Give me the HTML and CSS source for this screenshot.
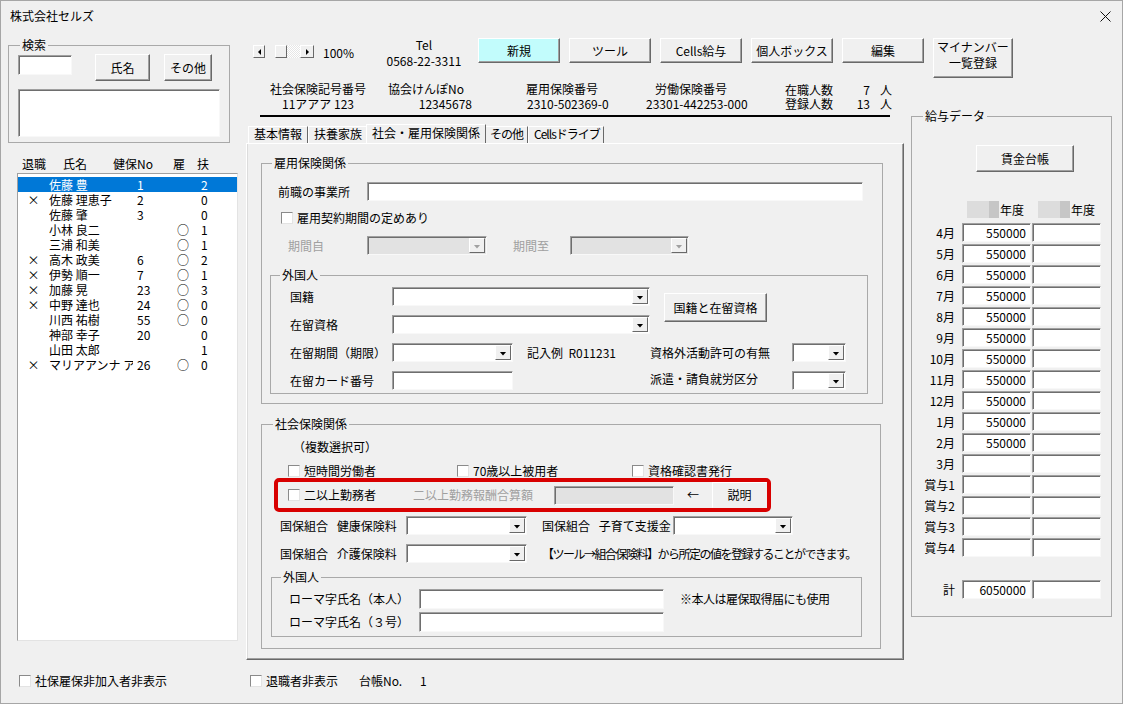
FILE: index.html
```html
<!DOCTYPE html>
<html lang="ja">
<head>
<meta charset="utf-8">
<title>株式会社セルズ</title>
<link rel="stylesheet" href="styles.css">
</head>
<body>
<div class="window">
  <div class="titlebar">
    <span class="title">株式会社セルズ</span>
    <svg class="close" width="11" height="11" viewBox="0 0 11 11"><path d="M0.5 0.5L10.5 10.5M10.5 0.5L0.5 10.5" stroke="#111" stroke-width="1"/></svg>
  </div>
  <div class="main">
    <div class="left">
      <fieldset class="group search">
        <legend>検索</legend>
        <div class="search-row">
          <div class="txt search-input"></div>
          <div class="btn btn-name">氏名</div>
          <div class="btn btn-other">その他</div>
        </div>
        <div class="txt search-list"></div>
      </fieldset>
      <div class="list-head">
        <span class="h-ret">退職</span><span class="h-name">氏名</span><span class="h-no">健保No</span><span class="h-koyo">雇</span><span>扶</span>
      </div>
      <div class="listbox">
        <div class="lrow sel"><span class="c-x"></span><span class="c-name">佐藤 豊</span><span class="c-no">1</span><span class="c-o"></span><span class="c-f">2</span></div>
        <div class="lrow"><span class="c-x">×</span><span class="c-name">佐藤 理恵子</span><span class="c-no">2</span><span class="c-o"></span><span class="c-f">0</span></div>
        <div class="lrow"><span class="c-x"></span><span class="c-name">佐藤 肇</span><span class="c-no">3</span><span class="c-o"></span><span class="c-f">0</span></div>
        <div class="lrow"><span class="c-x"></span><span class="c-name">小林 良二</span><span class="c-no"></span><span class="c-o">○</span><span class="c-f">1</span></div>
        <div class="lrow"><span class="c-x"></span><span class="c-name">三浦 和美</span><span class="c-no"></span><span class="c-o">○</span><span class="c-f">1</span></div>
        <div class="lrow"><span class="c-x">×</span><span class="c-name">高木 政美</span><span class="c-no">6</span><span class="c-o">○</span><span class="c-f">2</span></div>
        <div class="lrow"><span class="c-x">×</span><span class="c-name">伊勢 順一</span><span class="c-no">7</span><span class="c-o">○</span><span class="c-f">1</span></div>
        <div class="lrow"><span class="c-x">×</span><span class="c-name">加藤 晃</span><span class="c-no">23</span><span class="c-o">○</span><span class="c-f">3</span></div>
        <div class="lrow"><span class="c-x">×</span><span class="c-name">中野 達也</span><span class="c-no">24</span><span class="c-o">○</span><span class="c-f">0</span></div>
        <div class="lrow"><span class="c-x"></span><span class="c-name">川西 祐樹</span><span class="c-no">55</span><span class="c-o">○</span><span class="c-f">0</span></div>
        <div class="lrow"><span class="c-x"></span><span class="c-name">神部 幸子</span><span class="c-no">20</span><span class="c-o"></span><span class="c-f">0</span></div>
        <div class="lrow"><span class="c-x"></span><span class="c-name">山田 太郎</span><span class="c-no"></span><span class="c-o"></span><span class="c-f">1</span></div>
        <div class="lrow"><span class="c-x">×</span><span class="c-name">マリアアンナ アウグスト</span><span class="c-no">26</span><span class="c-o">○</span><span class="c-f">0</span></div>
      </div>
      <label class="chkrow left-foot"><span class="chk"></span>社保雇保非加入者非表示</label>
    </div>

    <div class="rightpart">
      <div class="toolbar">
        <div class="scroll"><span class="sb sb-l"></span><span class="sb-gap"></span><span class="sb-thumb"></span><span class="sb-track"></span><span class="sb sb-r"></span></div>
        <div class="zoom">100%</div>
        <div class="tel"><div>Tel</div><div>0568-22-3311</div></div>
        <div class="tb-btns">
          <div class="btn tbtn new">新規</div>
          <div class="btn tbtn">ツール</div>
          <div class="btn tbtn">Cells給与</div>
          <div class="btn tbtn">個人ボックス</div>
          <div class="btn tbtn">編集</div>
          <div class="btn tbtn mynum">マイナンバー<br>一覧登録</div>
        </div>
      </div>

      <div class="lower">
        <div class="center">
          <div class="info">
            <div class="b1"><div>社会保険記号番号</div><div>11アアア 123</div></div>
            <div class="b2"><div class="lab">協会けんぽNo</div><div>12345678</div></div>
            <div class="b3"><div>雇用保険番号</div><div class="val">2310-502369-0</div></div>
            <div class="b4"><div class="lab">労働保険番号</div><div>23301-442253-000</div></div>
            <div class="b5">
              <span>在職人数</span><span class="num">7</span><span class="unit">人</span>
              <span>登録人数</span><span class="num">13</span><span class="unit">人</span>
            </div>
          </div>
          <div class="rule"></div>

          <div class="tabs">
            <div class="tab">基本情報</div>
            <div class="tab">扶養家族</div>
            <div class="tab sel">社会・雇用保険関係</div>
            <div class="tab t4">その他</div>
            <div class="tab t5">Cellsドライブ</div>
          </div>
          <div class="tabpanel">
            <fieldset class="group koyo">
              <legend>雇用保険関係</legend>
              <div class="row row-prev">
                <span class="lbl-prev">前職の事業所</span>
                <div class="txt in-prev"></div>
              </div>
              <label class="chkrow row-keiyaku"><span class="chk"></span>雇用契約期間の定めあり</label>
              <div class="row row-kikan">
                <span class="dis-lbl lbl-kikan1">期間自</span>
                <div class="txt combo dis w120"><span class="arr"></span></div>
                <span class="dis-lbl lbl-kikan2">期間至</span>
                <div class="txt combo dis w119"><span class="arr"></span></div>
              </div>
              <fieldset class="group gai1">
                <legend>外国人</legend>
                <div class="gai-grid">
                  <span class="g-lbl r1">国籍</span>
                  <div class="txt combo r1 span2"><span class="arr"></span></div>
                  <span class="g-lbl r2">在留資格</span>
                  <div class="txt combo r2 span2"><span class="arr"></span></div>
                  <div class="btn btn-kokuseki">国籍と在留資格</div>
                  <span class="g-lbl r3">在留期間（期限）</span>
                  <div class="txt combo r3 c2"><span class="arr"></span></div>
                  <span class="g-lbl r3 c3 note">記入例&nbsp;&nbsp;R011231</span>
                  <span class="g-lbl r3 c4">資格外活動許可の有無</span>
                  <div class="txt combo r3 c5"><span class="arr"></span></div>
                  <span class="g-lbl r4">在留カード番号</span>
                  <div class="txt r4 c2"></div>
                  <span class="g-lbl r4 c4 up">派遣・請負就労区分</span>
                  <div class="txt combo r4 c5"><span class="arr"></span></div>
                </div>
              </fieldset>
            </fieldset>

            <fieldset class="group shakai">
              <legend>社会保険関係</legend>
              <div class="fukusu">（複数選択可）</div>
              <div class="row row-chk3">
                <label class="chkrow ck1"><span class="chk"></span>短時間労働者</label>
                <label class="chkrow ck2"><span class="chk"></span>70歳以上被用者</label>
                <label class="chkrow"><span class="chk"></span>資格確認書発行</label>
              </div>
              <div class="redbox">
                <label class="chkrow ck-nii"><span class="chk"></span>二以上勤務者</label>
                <span class="dis-lbl lbl-gassan">二以上勤務報酬合算額</span>
                <div class="txt dis-in"></div>
                <span class="arrow-left">←</span>
                <div class="btn btn-setsumei">説明</div>
              </div>
              <div class="row row-kokuho1">
                <span class="lbl-kokuho">国保組合 健康保険料</span>
                <div class="txt combo w121"><span class="arr"></span></div>
                <span class="lbl-kokuho2">国保組合 子育て支援金</span>
                <div class="txt combo w120"><span class="arr"></span></div>
              </div>
              <div class="row row-kokuho2">
                <span class="lbl-kokuho">国保組合 介護保険料</span>
                <div class="txt combo w121"><span class="arr"></span></div>
                <span class="kokuho-note">【ツール→組合保険料】から所定の値を登録することができます。</span>
              </div>
              <fieldset class="group gai2">
                <legend>外国人</legend>
                <div class="row roma1">
                  <span class="lbl-roma">ローマ字氏名（本人）</span>
                  <div class="txt in-roma"></div>
                  <span class="roma-note">※本人は雇保取得届にも使用</span>
                </div>
                <div class="row roma2">
                  <span class="lbl-roma">ローマ字氏名（３号）</span>
                  <div class="txt in-roma"></div>
                </div>
              </fieldset>
            </fieldset>
          </div>

          <div class="bottom-row">
            <label class="chkrow"><span class="chk"></span><span class="lbl-taishoku">退職者非表示</span></label>
            <span class="lbl-daicho">台帳No.</span>
            <span>1</span>
          </div>
        </div>

        <fieldset class="group salary">
          <legend>給与データ</legend>
          <div class="btn btn-chingin">賃金台帳</div>
          <div class="sal-head">
            <span></span>
            <span class="yr"><span class="blur"></span>年度</span>
            <span class="yr yr2"><span class="blur"></span>年度</span>
          </div>
          <div class="sal-grid">
            <span class="ml">4月</span><span class="txt sv">550000</span><span class="txt sv"></span>
            <span class="ml">5月</span><span class="txt sv">550000</span><span class="txt sv"></span>
            <span class="ml">6月</span><span class="txt sv">550000</span><span class="txt sv"></span>
            <span class="ml">7月</span><span class="txt sv">550000</span><span class="txt sv"></span>
            <span class="ml">8月</span><span class="txt sv">550000</span><span class="txt sv"></span>
            <span class="ml">9月</span><span class="txt sv">550000</span><span class="txt sv"></span>
            <span class="ml">10月</span><span class="txt sv">550000</span><span class="txt sv"></span>
            <span class="ml">11月</span><span class="txt sv">550000</span><span class="txt sv"></span>
            <span class="ml">12月</span><span class="txt sv">550000</span><span class="txt sv"></span>
            <span class="ml">1月</span><span class="txt sv">550000</span><span class="txt sv"></span>
            <span class="ml">2月</span><span class="txt sv">550000</span><span class="txt sv"></span>
            <span class="ml">3月</span><span class="txt sv"></span><span class="txt sv"></span>
            <span class="ml">賞与1</span><span class="txt sv"></span><span class="txt sv"></span>
            <span class="ml">賞与2</span><span class="txt sv"></span><span class="txt sv"></span>
            <span class="ml">賞与3</span><span class="txt sv"></span><span class="txt sv"></span>
            <span class="ml">賞与4</span><span class="txt sv"></span><span class="txt sv"></span>
          </div>
          <div class="sal-grid sal-total">
            <span class="ml">計</span><span class="txt sv">6050000</span><span class="txt sv"></span>
          </div>
        </fieldset>
      </div>
    </div>
  </div>
</div>
</body>
</html>
```

FILE: styles.css
```css
* { box-sizing: border-box; }
html, body { margin: 0; padding: 0; }
body {
  background: #f0f0f0;
  font-family: "Noto Sans CJK JP", "Noto Sans", sans-serif;
  font-size: 12px;
  line-height: 14px;
  color: #000;
}
.window {
  width: 1123px;
  height: 704px;
  overflow: hidden;
  background: #f0f0f0;
  box-shadow: inset 0 0 0 1px #a6a6a6;
}
.titlebar {
  height: 30px;
  display: flex;
  align-items: center;
  justify-content: space-between;
  padding: 2px 12px 0 10px;
}
.close { display: block; }
.main { display: flex; }

/* common controls */
.group { margin: 0; padding: 0; border: 1px solid #a9a9a9; min-width: 0; }
.group > legend { padding: 0 2px; line-height: 14px; height: 14px; }
.btn {
  background: #f0f0f0;
  border: 1px solid;
  border-color: #fff #696969 #696969 #fff;
  box-shadow: inset -1px -1px 0 #a0a0a0;
  display: flex;
  align-items: center;
  justify-content: center;
  white-space: nowrap;
}
.txt {
  background: #fff;
  border: 1px solid;
  border-color: #a0a0a0 #f8f8f8 #f8f8f8 #a0a0a0;
  box-shadow: inset 1px 1px 0 #6e6e6e;
}
.combo { display: flex; justify-content: flex-end; padding: 1px 1px 1px 2px; height: 19px; }
.arr {
  width: 16px;
  background: #f0f0f0;
  border: 1px solid;
  border-color: #fff #696969 #696969 #fff;
  display: flex;
  align-items: center;
  justify-content: center;
}
.arr::before {
  content: "";
  width: 7px;
  height: 4px;
  margin-top: 2px;
  background: #000;
  clip-path: polygon(0 0, 100% 0, 50% 100%);
}
.combo.dis { background: #e2e2e2; }
.combo.dis .arr::before { background: #a0a0a0; }
.chk {
  width: 12px;
  height: 12px;
  flex: none;
  background: #fff;
  border: 1px solid;
  border-color: #8a8a8a #e3e3e3 #e3e3e3 #8a8a8a;
  margin-right: 4px;
}
.chkrow { display: flex; align-items: center; height: 14px; white-space: nowrap; }
.row { display: flex; align-items: center; }
.row > * { flex: none; }
.dis-lbl { color: #a0a0a0; }

/* left column */
.left { width: 245px; flex: none; padding-left: 8px; display: flex; flex-direction: column; }
.search { width: 222px; margin-top: 8px; padding: 2px 0 5px; }
.search > legend { margin-left: 11px; }
.search-row { display: flex; align-items: flex-start; padding-left: 9px; }
.search-input { width: 54px; height: 20px; margin-top: 1px; }
.btn-name { width: 55px; height: 27px; margin-left: 23px; }
.btn-other { width: 48px; height: 27px; margin-left: 14px; }
.search-list { width: 202px; height: 48px; margin: 8px 0 0 9px; }
.list-head { display: flex; margin-top: 14px; padding-left: 14px; }
.h-ret { width: 41px; }
.h-name { width: 50px; }
.h-no { width: 60px; }
.h-koyo { width: 24px; }
.listbox {
  margin: 2px 0 0 9px;
  width: 221px;
  height: 468px;
  background: #fff;
  border: 1px solid;
  border-color: #a0a0a0 #e3e3e3 #e3e3e3 #a0a0a0;
  padding-top: 3px;
}
.lrow { display: flex; height: 15px; line-height: 15px; white-space: nowrap; }
.lrow.sel { background: #0078d7; color: #fff; }
.c-x { width: 31px; text-align: center; }
.c-name { width: 84px; margin-right: 4px; overflow: hidden; }
.c-no { width: 40px; }
.c-o { width: 12px; text-align: center; }
.c-f { padding-left: 12px; }
.left-foot { margin-top: 33px; padding-left: 11px; }

/* toolbar */
.rightpart { flex: 1; display: flex; flex-direction: column; }
.toolbar { display: flex; align-items: flex-start; height: 40px; margin-top: 8px; padding-left: 8px; }
.scroll { display: flex; margin-top: 7px; height: 13px; width: 61px; }
.sb {
  width: 12px; height: 13px;
  border: 1px solid; border-color: #fff #696969 #696969 #fff;
  background: #f0f0f0;
  display: flex; align-items: center; justify-content: center;
}
.sb-l::before { content: ""; border-top: 3px solid transparent; border-bottom: 3px solid transparent; border-right: 3px solid #000; }
.sb-r { width: 14px; }
.sb-r::before { content: ""; border-top: 3px solid transparent; border-bottom: 3px solid transparent; border-left: 3px solid #000; }
.sb-gap { width: 10px; }
.sb-thumb { width: 12px; height: 13px; border: 1px solid; border-color: #fff #696969 #696969 #fff; background: #f0f0f0; }
.sb-track { width: 13px; background: repeating-conic-gradient(#fff 0 25%, #e6e6e6 0 50%) 0 0 / 2px 2px; }
.zoom { width: 61px; margin: 8px 0 0 9px; }
.tel { width: 80px; text-align: center; line-height: 16px; margin-top: -1px; }
.tb-btns { display: flex; gap: 9px; margin-left: 14px; }
.tbtn { width: 82px; height: 25px; }
.new { background: #c2fcfc; }
.mynum { width: 80px; height: 40px; display: block; text-align: center; line-height: 16px; }

/* center */
.lower { display: flex; align-items: flex-start; }
.center { width: 660px; flex: none; display: flex; flex-direction: column; }
.info { display: flex; margin-top: 3px; height: 30px; line-height: 15px; white-space: nowrap; }
.b1 { margin-left: 13px; width: 120px; text-align: center; }
.b2 { margin-left: 6px; width: 88px; text-align: right; }
.b2 .lab { padding-right: 8px; }
.b3 { margin-left: 54px; width: 100px; }
.b3 .val { padding-left: 1px; }
.b4 { margin-left: 20px; width: 110px; }
.b4 .lab { padding-left: 9px; }
.b5 { margin-left: 29px; margin-top: 2px; display: grid; grid-template-columns: 60px 25px 24px; line-height: 13px; }
.b5 .num { text-align: right; }
.b5 .unit { padding-left: 10px; }
.rule { margin: 4px 0 0 15px; width: 630px; height: 2px; background: #000; }

.tabs { display: flex; align-items: flex-end; height: 19px; margin-top: 7px; padding-left: 3px; }
.tab {
  height: 17px;
  line-height: 14px;
  padding: 0 5px;
  border-left: 1px solid #fff;
  border-top: 1px solid #fff;
  border-right: 1px solid #696969;
  white-space: nowrap;
  background: #f0f0f0;
}
.tab.sel { height: 19px; line-height: 15px; margin: 0 -2px; position: relative; z-index: 1; }
.t4 { letter-spacing: -1px; padding: 0 4px 0 5px; }
.t5 { letter-spacing: -1px; padding: 0 3px 0 5px; }
.tabpanel {
  margin-left: 1px;
  width: 658px;
  height: 517px;
  border: 1px solid;
  border-color: #fff #696969 #696969 #fff;
  box-shadow: inset -1px -1px 0 #a0a0a0, inset 1px 0 0 #dcdcdc;
  padding: 12px 0 0 14px;
}

.koyo { width: 622px; padding-bottom: 9px; }
.koyo > legend { margin-left: 10px; }
.row-prev { margin-top: 12px; padding-left: 16px; }
.lbl-prev { width: 89px; }
.in-prev { width: 496px; height: 19px; }
.row-keiyaku { margin-top: 10px; padding-left: 19px; }
.row-kikan { margin-top: 11px; padding-left: 26px; }
.lbl-kikan1 { width: 79px; }
.lbl-kikan2 { width: 57px; margin-left: 26px; }
.w119 { width: 119px; }
.w120 { width: 120px; }
.w121 { width: 121px; }

.gai1 { width: 598px; margin: 13px 0 0 8px; padding-bottom: 3px; }
.gai1 > legend { margin-left: 9px; }
.gai-grid {
  display: grid;
  grid-template-columns: 102px 121px 137px 142px 54px;
  grid-auto-rows: 19px;
  row-gap: 9px;
  margin-top: 5px;
  padding-left: 19px;
}
.g-lbl { display: flex; align-items: center; white-space: nowrap; grid-column: 1; }
.r1 { grid-row: 1; }
.r2 { grid-row: 2; }
.r3 { grid-row: 3; }
.r4 { grid-row: 4; }
.span2 { grid-column: 2 / 4; }
.c2 { grid-column: 2; }
.c3 { grid-column: 3; }
.c4 { grid-column: 4; }
.c5 { grid-column: 5; }
.note { padding-left: 14px; }
.up { margin-top: -3px; }
.btn-kokuseki { grid-column: 4 / 6; grid-row: 1 / 3; width: 103px; height: 29px; margin: 6px 0 0 14px; }

.shakai { width: 620px; margin-top: 13px; padding-bottom: 11px; }
.shakai > legend { margin-left: 11px; }
.fukusu { margin-top: 9px; padding-left: 31px; }
.row-chk3 { margin-top: 10px; padding-left: 26px; height: 14px; }
.ck1 { width: 169px; }
.ck2 { width: 175px; }
.redbox {
  display: flex;
  align-items: center;
  margin-left: 12px;
  width: 497px;
  height: 34px;
  border: 4px solid #d80000;
  border-radius: 5px;
  padding-left: 10px;
}
.redbox > * { flex: none; }
.ck-nii { width: 125px; }
.lbl-gassan { width: 141px; white-space: nowrap; }
.dis-in { width: 120px; height: 19px; background: #e2e2e2; }
.arrow-left { width: 38px; text-align: center; }
.btn-setsumei { flex: 1; align-self: stretch; border-color: #fff #f0f0f0 #f0f0f0 #fff; box-shadow: none; }
.row-kokuho1 { margin-top: 4px; padding-left: 18px; }
.row-kokuho2 { margin-top: 9px; padding-left: 18px; }
.lbl-kokuho { width: 126px; word-spacing: 6px; white-space: nowrap; }
.lbl-kokuho2 { width: 131px; margin-left: 15px; word-spacing: 6px; white-space: nowrap; }
.kokuho-note { margin-left: 15px; white-space: nowrap; letter-spacing: -1.5px; }

.gai2 { width: 591px; margin: 7px 0 0 9px; padding-bottom: 4px; }
.gai2 > legend { margin-left: 9px; }
.roma1 { margin-top: 5px; padding-left: 17px; }
.roma2 { margin-top: 3px; padding-left: 17px; }
.lbl-roma { width: 130px; white-space: nowrap; }
.in-roma { width: 245px; height: 20px; }
.roma-note { margin-left: 16px; white-space: nowrap; letter-spacing: -0.5px; }

.bottom-row { display: flex; align-items: center; margin-top: 14px; padding-left: 5px; height: 14px; }
.lbl-taishoku { width: 93px; }
.lbl-daicho { width: 61px; }

/* salary */
.salary { width: 201px; margin: 31px 0 0 6px; padding-bottom: 17px; }
.salary > legend { margin-left: 11px; }
.btn-chingin { width: 98px; height: 27px; margin: 22px 0 0 64px; }
.sal-head { display: grid; grid-template-columns: 49px 69px 69px; column-gap: 1px; height: 17px; margin-top: 29px; margin-bottom: 5px; }
.yr { display: flex; align-items: center; padding-left: 5px; white-space: nowrap; }
.yr2 { padding-left: 6px; }
.blur { width: 32px; height: 17px; margin-right: 1px; background: linear-gradient(to right, #dcdcdc 0 22px, #c6c6c6 22px 32px); }
.sal-grid { display: grid; grid-template-columns: 49px 69px 69px; column-gap: 1px; row-gap: 2px; grid-auto-rows: 19px; }
.ml { text-align: right; padding-right: 6px; line-height: 19px; white-space: nowrap; }
.sv { text-align: right; padding-right: 4px; line-height: 17px; }
.sal-total { margin-top: 23px; }
```
